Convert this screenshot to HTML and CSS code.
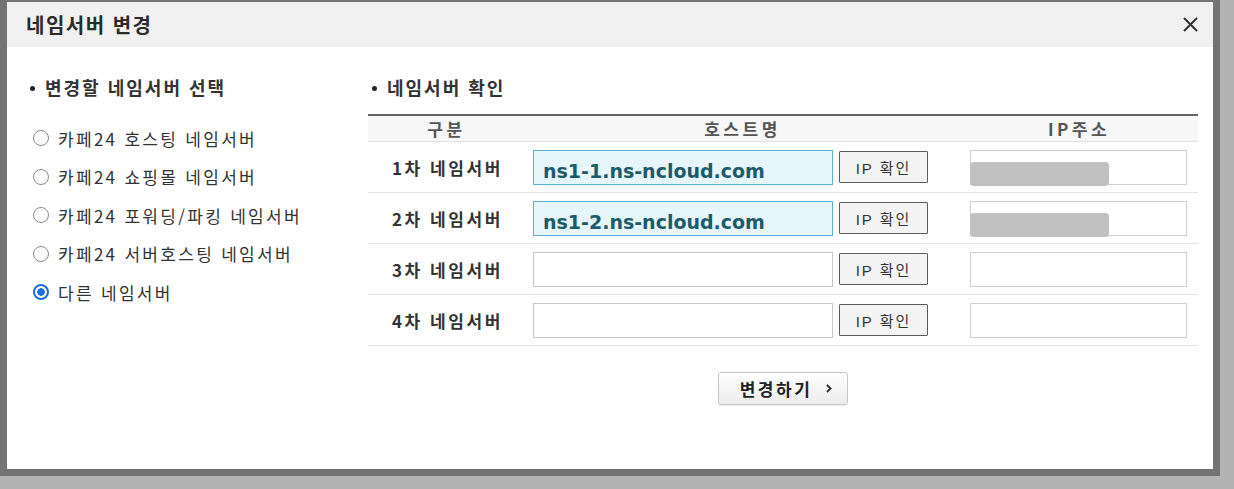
FILE: index.html
```html
<!DOCTYPE html>
<html lang="ko">
<head>
    <meta charset="UTF-8">
    <title>네임서버 변경</title>
    <link rel="stylesheet" href="styles.css">
</head>
<body>
    <div class="dialog">
        <div class="dialog-head">
            <h1>네임서버 변경</h1>
            <button class="close" type="button" aria-label="닫기">
                <svg width="15" height="15" viewBox="0 0 15 15"><path d="M1 1L14 14M14 1L1 14" stroke="#333" stroke-width="2" fill="none"/></svg>
            </button>
        </div>

        <div class="dialog-body">
            <div class="select-col">
                <h2 class="bullet-title">변경할 네임서버 선택</h2>
                <ul class="ns-options">
                    <li><label><input type="radio" name="ns">카페24 호스팅 네임서버</label></li>
                    <li><label><input type="radio" name="ns">카페24 쇼핑몰 네임서버</label></li>
                    <li><label><input type="radio" name="ns">카페24 포워딩/파킹 네임서버</label></li>
                    <li><label><input type="radio" name="ns">카페24 서버호스팅 네임서버</label></li>
                    <li><label><input type="radio" name="ns" checked>다른 네임서버</label></li>
                </ul>
            </div>

            <div class="check-col">
                <h2 class="bullet-title">네임서버 확인</h2>
                <table class="ns-table">
                    <colgroup>
                        <col class="col-name">
                        <col class="col-host">
                        <col class="col-ip">
                    </colgroup>
                    <thead>
                        <tr><th>구분</th><th>호스트명</th><th>IP주소</th></tr>
                    </thead>
                    <tbody>
                        <tr>
                            <td class="label">1차 네임서버</td>
                            <td><input class="host filled" type="text" value="ns1-1.ns-ncloud.com"><button class="btn-ip" type="button">IP 확인</button></td>
                            <td><div class="ip-wrap"><input class="ip" type="text"><span class="masked"></span></div></td>
                        </tr>
                        <tr>
                            <td class="label">2차 네임서버</td>
                            <td><input class="host filled" type="text" value="ns1-2.ns-ncloud.com"><button class="btn-ip" type="button">IP 확인</button></td>
                            <td><div class="ip-wrap"><input class="ip" type="text"><span class="masked"></span></div></td>
                        </tr>
                        <tr>
                            <td class="label">3차 네임서버</td>
                            <td><input class="host" type="text"><button class="btn-ip" type="button">IP 확인</button></td>
                            <td><div class="ip-wrap"><input class="ip" type="text"></div></td>
                        </tr>
                        <tr>
                            <td class="label">4차 네임서버</td>
                            <td><input class="host" type="text"><button class="btn-ip" type="button">IP 확인</button></td>
                            <td><div class="ip-wrap"><input class="ip" type="text"></div></td>
                        </tr>
                    </tbody>
                </table>

                <div class="actions">
                    <button class="btn-change" type="button">변경하기
                        <svg width="6" height="9" viewBox="0 0 6 9"><path d="M1 1L4.5 4.5L1 8" stroke="#333" stroke-width="2" fill="none"/></svg>
                    </button>
                </div>
            </div>
        </div>
    </div>
</body>
</html>
```

FILE: styles.css
```css
body {
    margin: 0;
    background-color: #b3b3b3;
    font-family: "Noto Sans CJK KR", "Noto Sans", sans-serif;
    color: #333;
}

.dialog {
    width: 1206px;
    height: 467px;
    border: 7px solid #737373;
    border-top-width: 2px;
    background-color: #fff;
}

.dialog-head {
    height: 45px;
    background-color: #f1f1f1;
    display: flex;
    align-items: center;
    justify-content: space-between;
    padding: 0 15px 0 19px;
}

.dialog-head h1 {
    margin: 0;
    font-size: 20px;
    line-height: 22px;
    font-weight: bold;
    letter-spacing: 1.5px;
    color: #2b2b2b;
}

.close {
    border: 0;
    padding: 0;
    background: none;
    width: 15px;
    height: 15px;
    display: flex;
}

.dialog-body {
    display: flex;
    padding: 30px 15px 0 23px;
}

.select-col {
    width: 338px;
}

.check-col {
    width: 830px;
}

.bullet-title {
    margin: 0;
    font-size: 18px;
    line-height: 20px;
    font-weight: bold;
    letter-spacing: 2px;
    color: #333;
}

.bullet-title::before {
    content: "";
    display: inline-block;
    width: 5px;
    height: 5px;
    border-radius: 50%;
    background-color: #222;
    vertical-align: middle;
    margin: -3px 10px 0 0;
}

.check-col .bullet-title {
    padding-left: 4px;
}

.ns-options {
    list-style: none;
    margin: 22px 0 0;
    padding: 0 0 0 3px;
}

.ns-options li {
    height: 38.5px;
    display: flex;
    align-items: center;
}

.ns-options label {
    display: flex;
    align-items: center;
    font-size: 17px;
    letter-spacing: 2.3px;
    color: #333;
}

/* 라디오 버튼 */
.ns-options input {
    appearance: none;
    box-sizing: border-box;
    width: 16px;
    height: 16px;
    margin: 0 9px 0 0;
    border: 1px solid #8a8a8a;
    border-radius: 50%;
    background-color: #fff;
}

.ns-options input:checked {
    border: 2px solid #1a6fe0;
    background: radial-gradient(circle, #1a6fe0 0 3.5px, #fff 4px);
}

/* 네임서버 테이블 */
.ns-table {
    width: 830px;
    margin-top: 17px;
    border-collapse: collapse;
    table-layout: fixed;
    border-top: 2px solid #666;
}

.col-name { width: 157px; }
.col-host { width: 435px; }
.col-ip { width: 238px; }

.ns-table th {
    height: 25px;
    padding: 0;
    background-color: #f7f7f7;
    border-bottom: 1px solid #e2e2e2;
    font-size: 17px;
    font-weight: bold;
    letter-spacing: 3.5px;
    color: #555;
    text-align: center;
}

.ns-table td {
    height: 50px;
    padding: 0;
    border-bottom: 1px solid #e2e2e2;
    vertical-align: middle;
}

.ns-table td.label {
    text-align: center;
    font-size: 17px;
    font-weight: bold;
    letter-spacing: 2.6px;
    padding-left: 2px;
}

.ns-table td:nth-child(2) {
    padding-left: 8px;
}

.ns-table td:nth-child(3) {
    padding-left: 10px;
}

.host {
    box-sizing: border-box;
    width: 300px;
    height: 35px;
    border: 1px solid #c8c8c8;
    padding: 7px 9px 0;
    vertical-align: middle;
    font-family: "DejaVu Sans", Verdana, sans-serif;
    font-size: 19px;
    font-weight: bold;
    color: #1c5a6c;
}

.host.filled {
    border-color: #5ab3cb;
    background-color: #e7f6fb;
}

.btn-ip {
    box-sizing: border-box;
    width: 89px;
    height: 32px;
    margin-left: 6px;
    vertical-align: middle;
    border: 1px solid #5c5c5c;
    border-radius: 1px;
    background-color: #f4f4f4;
    font-family: "Liberation Sans", "Noto Sans CJK KR", sans-serif;
    font-size: 15px;
    letter-spacing: 2px;
    color: #333;
    padding: 0;
}

.ip-wrap {
    position: relative;
    width: 217px;
}

.ip {
    box-sizing: border-box;
    width: 217px;
    height: 35px;
    border: 1px solid #cfcfcf;
    display: block;
}

.masked {
    position: absolute;
    left: 0;
    top: 12px;
    width: 139px;
    height: 24px;
    border-radius: 4px;
    background-color: #c1c1c1;
}

.actions {
    margin-top: 26px;
    text-align: center;
}

.btn-change {
    box-sizing: border-box;
    width: 130px;
    height: 33px;
    border: 1px solid #c6c6c6;
    border-radius: 3px;
    background: linear-gradient(#ffffff, #ececec);
    box-shadow: 0 1px 1px rgba(0, 0, 0, 0.08);
    font-family: "Noto Sans CJK KR", sans-serif;
    font-size: 17px;
    font-weight: bold;
    letter-spacing: 2.5px;
    color: #222;
    padding: 0 0 0 6px;
    display: inline-flex;
    align-items: center;
    justify-content: center;
    gap: 14px;
}
```
